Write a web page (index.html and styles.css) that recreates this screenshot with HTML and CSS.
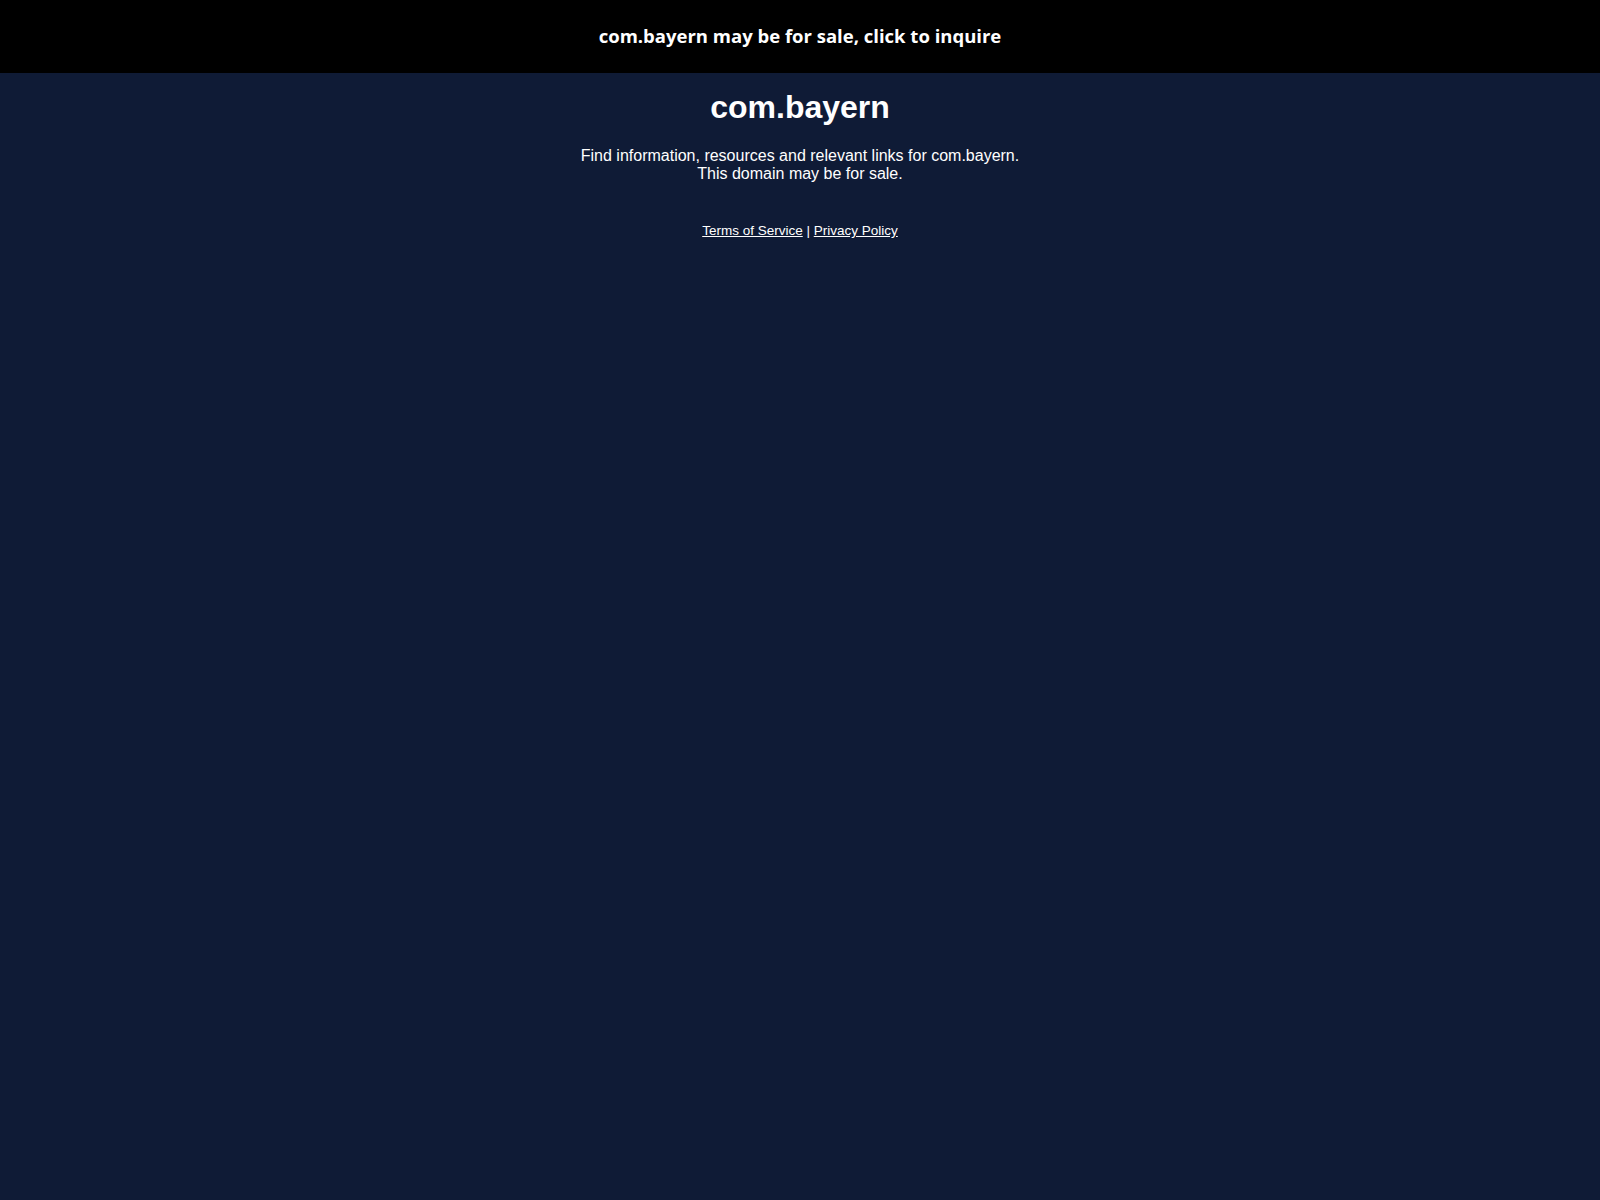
FILE: index.html
```html
<!DOCTYPE html>
<html>
<head>
<meta charset="utf-8">
<title>com.bayern</title>
<link rel="stylesheet" href="styles.css">
</head>
<body>
<a class="banner" href="#">com.bayern may be for sale, click to inquire</a>
<main class="content">
  <h1 class="title">com.bayern</h1>
  <p class="desc">Find information, resources and relevant links for com.bayern.<br>This domain may be for sale.</p>
  <div class="links"><a href="#">Terms of Service</a> | <a href="#">Privacy Policy</a></div>
</main>
</body>
</html>
```
FILE: styles.css
```css
html, body {
  margin: 0;
  padding: 0;
  background: #0f1b36;
  min-height: 100%;
}
body {
  font-family: "Liberation Sans", Arial, sans-serif;
  color: #ffffff;
}
.banner {
  display: flex;
  align-items: center;
  justify-content: center;
  box-sizing: border-box;
  height: 73px;
  padding-bottom: 2px;
  background: #000000;
  color: #ffffff;
  text-decoration: none;
  font-family: "Open Sans", "DejaVu Sans", sans-serif;
  font-weight: 700;
  font-size: 18.5px;
}
.content {
  text-align: center;
}
.title {
  margin: 16px 0 0;
  font-size: 32px;
  font-weight: 700;
  line-height: normal;
}
.desc {
  margin: 21px 0 0;
  font-size: 16px;
  line-height: normal;
}
.links {
  margin-top: 40px;
  font-size: 13.5px;
}
.links a {
  color: #ffffff;
  text-decoration: underline;
}
```
